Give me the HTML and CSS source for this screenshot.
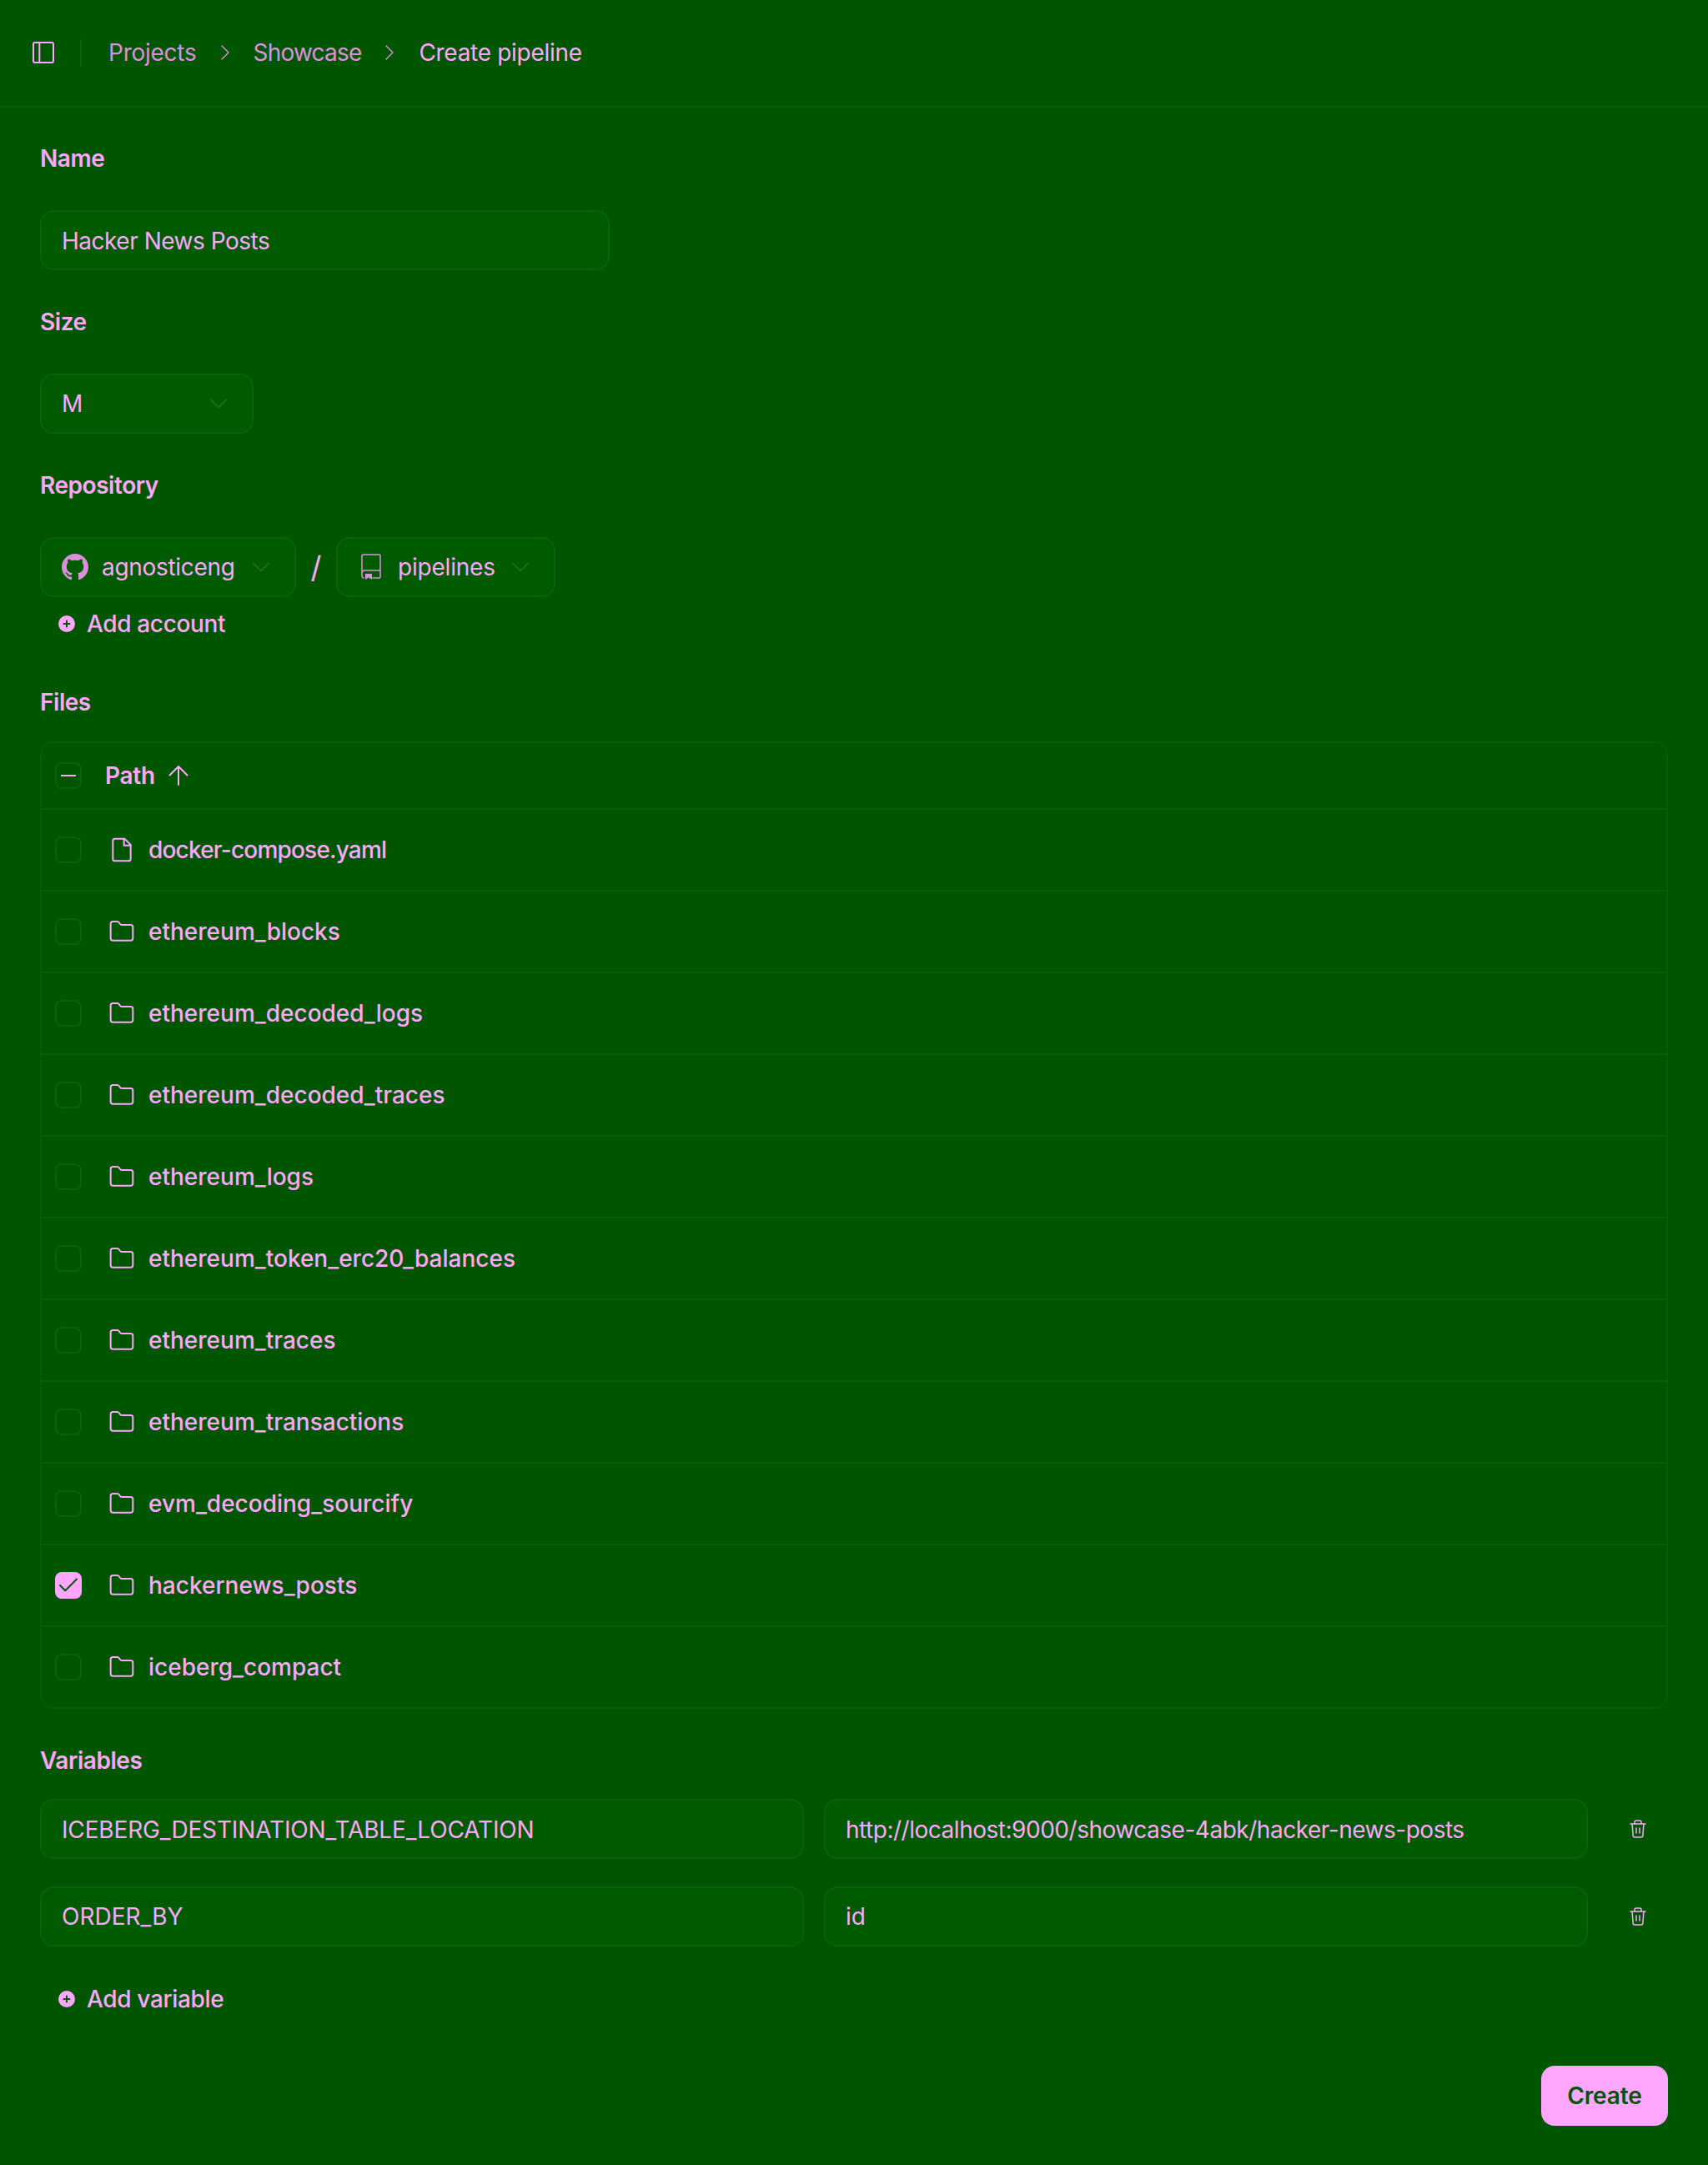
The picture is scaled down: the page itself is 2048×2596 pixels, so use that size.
FILE: index.html
```html
<!DOCTYPE html>
<html lang="en">
<head>
<meta charset="utf-8">
<title>Create pipeline</title>
<link rel="stylesheet" href="styles.css">
</head>
<body>
<svg class="defs" width="0" height="0" aria-hidden="true">
  <symbol id="folder" viewBox="0 0 24 24"><path d="M20 20a2 2 0 0 0 2-2V8a2 2 0 0 0-2-2h-7.900a2 2 0 0 1-1.690-.9L9.600 3.900A2 2 0 0 0 7.930 3H4a2 2 0 0 0-2 2v13a2 2 0 0 0 2 2Z"/></symbol>
  <symbol id="chev" viewBox="0 0 24 24"><path d="m6 9 6 6 6-6"/></symbol>
  <symbol id="right" viewBox="0 0 24 24"><path d="m9 18 6-6-6-6"/></symbol>
  <symbol id="plus" viewBox="0 0 24 24"><circle cx="12" cy="12" r="10" fill="currentColor" stroke="none"/><path class="plus-mark" d="M12 8.500v7M8.500 12h7"/></symbol>
  <symbol id="trash" viewBox="0 0 24 24"><path d="M3 6h18M19 6l-1.200 14a2 2 0 0 1-2 2H8.200a2 2 0 0 1-2-2L5 6M8 6V4a2 2 0 0 1 2-2h4a2 2 0 0 1 2 2v2M10 11v6M14 11v6"/></symbol>
</svg>
<header class="topbar">
  <svg class="ico side" viewBox="0 0 24 24"><rect x="3" y="3" width="18" height="18" rx="1.500"/><path d="M8.500 3v18"/></svg>
  <span class="divider"></span>
  <nav class="crumbs">
    <span class="crumb c-projects">Projects</span>
    <svg class="ico sep"><use href="#right"/></svg>
    <span class="crumb c-showcase">Showcase</span>
    <svg class="ico sep"><use href="#right"/></svg>
    <span class="crumb current">Create pipeline</span>
  </nav>
</header>
<main class="form">
  <h2 class="label l-name">Name</h2>
  <div class="field name-field"><span class="tight">Hacker News Posts</span></div>

  <h2 class="label l-next">Size</h2>
  <div class="field select size-field"><span class="grow">M</span><svg class="ico chev"><use href="#chev"/></svg></div>

  <h2 class="label l-next">Repository</h2>
  <div class="repo">
    <div class="field select account">
      <svg class="gh" viewBox="0 0 16 16"><path d="M8 0C3.580 0 0 3.580 0 8c0 3.540 2.290 6.530 5.470 7.590.4.070.55-.17.55-.38 0-.19-.01-.82-.01-1.490-2.010.37-2.530-.49-2.690-.94-.09-.23-.48-.94-.82-1.130-.28-.15-.68-.52-.01-.53.63-.01 1.080.58 1.230.82.720 1.210 1.870.87 2.330.66.070-.52.280-.87.510-1.070-1.780-.2-3.640-.89-3.640-3.950 0-.87.310-1.590.82-2.150-.08-.2-.36-1.020.08-2.120 0 0 .67-.21 2.200.82.640-.18 1.320-.27 2-.27s1.360.09 2 .27c1.530-1.040 2.200-.82 2.200-.82.440 1.100.160 1.920.08 2.120.51.560.82 1.270.82 2.150 0 3.070-1.870 3.750-3.650 3.950.29.250.54.730.54 1.480 0 1.070-.01 1.930-.01 2.200 0 .21.150.46.55.38A8.010 8.010 0 0 0 16 8c0-4.420-3.580-8-8-8Z"/></svg>
      <span class="acct-name">agnosticeng</span>
      <svg class="ico chev"><use href="#chev"/></svg>
    </div>
    <span class="slash">/</span>
    <div class="field select reponame">
      <svg class="book" viewBox="0 0 24 32"><path class="book-line" d="M1 25V3a2 2 0 0 1 2-2h19a1 1 0 0 1 1 1v26a1 1 0 0 1-1 1h-8M23 20H4a3 3 0 0 0-3 3v3a3 3 0 0 0 2 3"/><path class="book-mark" d="M5 24h8v7l-4-2.500L5 31Z"/></svg>
      <span class="repo-name">pipelines</span>
      <svg class="ico chev"><use href="#chev"/></svg>
    </div>
  </div>
  <div class="add add-account"><svg class="ico plus"><use href="#plus"/></svg><span>Add account</span></div>

  <h2 class="label l-files">Files</h2>
  <section class="table">
    <div class="thead">
      <span class="check"><i class="dash"></i></span>
      <span class="path-head">Path</span>
      <svg class="ico up" viewBox="0 0 24 24"><path d="M12 23V1M1.500 11.500 12 1l10.500 10.500"/></svg>
    </div>
    <div class="row"><span class="check"></span><svg class="ico file" viewBox="0 0 24 24"><path d="M14.500 2H6a2 2 0 0 0-2 2v16a2 2 0 0 0 2 2h12a2 2 0 0 0 2-2V7.500L14.500 2Z"/><path d="M14 2v6h6"/></svg><span class="fname docker">docker-compose.yaml</span></div>
    <div class="row"><span class="check"></span><svg class="ico folder"><use href="#folder"/></svg><span class="fname">ethereum_blocks</span></div>
    <div class="row"><span class="check"></span><svg class="ico folder"><use href="#folder"/></svg><span class="fname">ethereum_decoded_logs</span></div>
    <div class="row"><span class="check"></span><svg class="ico folder"><use href="#folder"/></svg><span class="fname">ethereum_decoded_traces</span></div>
    <div class="row"><span class="check"></span><svg class="ico folder"><use href="#folder"/></svg><span class="fname">ethereum_logs</span></div>
    <div class="row"><span class="check"></span><svg class="ico folder"><use href="#folder"/></svg><span class="fname">ethereum_token_erc20_balances</span></div>
    <div class="row"><span class="check"></span><svg class="ico folder"><use href="#folder"/></svg><span class="fname">ethereum_traces</span></div>
    <div class="row"><span class="check"></span><svg class="ico folder"><use href="#folder"/></svg><span class="fname">ethereum_transactions</span></div>
    <div class="row"><span class="check"></span><svg class="ico folder"><use href="#folder"/></svg><span class="fname">evm_decoding_sourcify</span></div>
    <div class="row"><span class="check on"><svg class="ico tick" viewBox="0 0 24 24"><path d="M20 6 9 17l-5-5"/></svg></span><svg class="ico folder"><use href="#folder"/></svg><span class="fname">hackernews_posts</span></div>
    <div class="row"><span class="check"></span><svg class="ico folder"><use href="#folder"/></svg><span class="fname">iceberg_compact</span></div>
  </section>

  <h2 class="label l-vars">Variables</h2>
  <div class="vars">
    <div class="var">
      <div class="field"><span class="caps">ICEBERG_DESTINATION_TABLE_LOCATION</span></div>
      <div class="field"><span class="tight">http://localhost:9000/showcase-4abk/hacker-news-posts</span></div>
      <svg class="ico trash"><use href="#trash"/></svg>
    </div>
    <div class="var">
      <div class="field">ORDER_BY</div>
      <div class="field">id</div>
      <svg class="ico trash"><use href="#trash"/></svg>
    </div>
  </div>
  <div class="add add-variable"><svg class="ico plus"><use href="#plus"/></svg><span>Add variable</span></div>
  <div class="actions"><button class="create">Create</button></div>
</main>
</body>
</html>
```
FILE: styles.css
```css
* { box-sizing: border-box; }
html, body { margin: 0; padding: 0; }
body {
  width: 2048px;
  height: 2596px;
  background: #005500;
  color: #ffa6ff;
  font-family: Inter, "Liberation Sans", sans-serif;
  font-size: 28px;
  line-height: 40px;
  overflow: hidden;
}
.defs { position: absolute; }
.ico {
  fill: none;
  stroke: currentColor;
  stroke-width: 1.500;
  stroke-linecap: round;
  stroke-linejoin: round;
  flex: none;
}
.topbar {
  height: 129px;
  display: flex;
  align-items: center;
  padding: 0 0 1px 36px;
  border-bottom: 2px solid #0a5d0a;
}
.side { width: 32px; height: 32px; }
.divider { width: 2px; height: 33px; margin: 0 32px 0 28px; background: #0a5d0a; }
.crumbs { display: flex; align-items: center; }
.crumb { color: #dc90dc; }
.c-projects { letter-spacing: -0.25px; }
.c-showcase { letter-spacing: -0.8px; }
.crumb.current { color: #ffa6ff; letter-spacing: -0.3px; margin-left: 1px; }
.sep { width: 32px; height: 32px; margin: 0 18px; color: #dc90dc; stroke-width: 1; }
.form { padding: 0 48px; display: flex; flex-direction: column; }
.label { margin: 0; font-size: 28px; line-height: 40px; font-weight: 600; letter-spacing: -0.45px; }
.l-name { margin-top: 41px; margin-bottom: 42px; }
.l-next { margin-top: 42px; margin-bottom: 42px; }
.l-files { margin-top: 54px; margin-bottom: 27px; }
.l-vars { margin-top: 42px; margin-bottom: 26px; }
.field {
  height: 72px;
  border: 2px solid #0a620a;
  border-radius: 16px;
  background: #005a00;
  padding: 0 24px;
  display: flex;
  align-items: center;
}
.tight { letter-spacing: -0.48px; padding-top: 1px; }
.caps { letter-spacing: -0.15px; padding-top: 1px; }
.name-field { width: 683px; }
.size-field { width: 256px; }
.grow { flex: 1; }
.select { padding-right: 22px; }
.chev { width: 36px; height: 36px; color: #1f6c1f; stroke-width: 1.330; }
.repo { display: flex; align-items: center; }
.account { width: 307px; }
.gh { width: 32px; height: 32px; fill: #dc90dc; flex: none; margin-right: 16px; }
.acct-name { flex: 1; letter-spacing: -0.3px; }
.slash { width: 48px; text-align: center; font-size: 36px; }
.reponame { width: 263px; }
.book { width: 24px; height: 32px; margin: 0 20px 0 4px; flex: none; }
.book-line { fill: none; stroke: #dc90dc; stroke-width: 1.500; stroke-linecap: round; stroke-linejoin: round; }
.book-mark { fill: #dc90dc; }
.repo-name { flex: 1; letter-spacing: -0.2px; }
.add { display: flex; align-items: center; gap: 12px; font-weight: 500; height: 40px; padding-left: 20px; letter-spacing: -0.35px; }
.add-account { margin-top: 12px; }
.plus { width: 24px; height: 24px; }
.plus-mark { stroke: #005500; stroke-width: 2; }
.table { border: 2px solid #085c08; border-radius: 16px; }
.thead { height: 80px; display: flex; align-items: center; padding-left: 16px; border-bottom: 2px solid #085c08; font-weight: 600; }
.check {
  width: 32px; height: 32px; flex: none;
  border: 2px solid #0a620a; border-radius: 8px;
  display: flex; align-items: center; justify-content: center;
}
.check.on { background: #ffa6ff; border-color: #ffa6ff; }
.dash { width: 18px; height: 2px; background: #ffa6ff; flex: none; }
.tick { width: 30px; height: 30px; color: #005500; stroke-width: 1.600; }
.path-head { margin-left: 28px; letter-spacing: -0.3px; }
.up { width: 24px; height: 24px; margin-left: 16px; stroke-width: 2; }
.row { height: 98px; display: flex; align-items: center; padding-left: 16px; border-bottom: 2px solid #085c08; font-weight: 500; }
.row:last-child { border-bottom: 0; height: 96px; }
.file, .folder { width: 32px; height: 32px; margin-left: 32px; }
.fname { margin-left: 16px; }
.docker { letter-spacing: -0.8px; }
.vars { display: flex; flex-direction: column; gap: 33px; }
.var { display: grid; grid-template-columns: 916px 916px 48px; column-gap: 24px; align-items: center; }
.var .field { width: 916px; }
.trash { width: 24px; height: 24px; margin-left: 24px; }
.add-variable { margin-top: 43px; }
.actions { display: flex; justify-content: flex-end; margin-top: 60px; }
.create {
  width: 152px; height: 72px; border: 0; border-radius: 16px;
  background: #ffa6ff; color: #005500;
  font: 600 28px/40px Inter, "Liberation Sans", sans-serif;
  letter-spacing: -0.1px;
}
```
